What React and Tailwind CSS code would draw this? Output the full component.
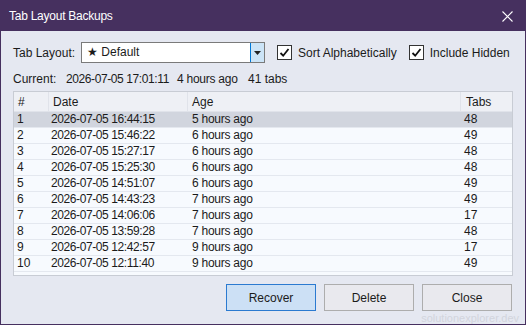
import React from "react";

const rows = [
  ["1", "2026-07-05 16:44:15", "5 hours ago", "48"],
  ["2", "2026-07-05 15:46:22", "6 hours ago", "49"],
  ["3", "2026-07-05 15:27:17", "6 hours ago", "48"],
  ["4", "2026-07-05 15:25:30", "6 hours ago", "48"],
  ["5", "2026-07-05 14:51:07", "6 hours ago", "49"],
  ["6", "2026-07-05 14:43:23", "7 hours ago", "49"],
  ["7", "2026-07-05 14:06:06", "7 hours ago", "17"],
  ["8", "2026-07-05 13:59:28", "7 hours ago", "48"],
  ["9", "2026-07-05 12:42:57", "9 hours ago", "17"],
  ["10", "2026-07-05 12:11:40", "9 hours ago", "49"],
];

function Check({ label }) {
  return (
    <label className="flex items-center gap-[6px]">
      <span className="w-[15px] h-[15px] border border-[#333] bg-white flex items-center justify-center">
        <svg width="11" height="11" viewBox="0 0 11 11">
          <path d="M1.5 6 L4.2 8.7 L9.5 2" fill="none" stroke="#111" strokeWidth="1.8" />
        </svg>
      </span>
      <span>{label}</span>
    </label>
  );
}

export default function App() {
  return (
    <div
      className="w-[526px] h-[325px] flex flex-col bg-[#e5e8f1] border border-[#46305f] text-[12px] text-[#1b1b1b] overflow-hidden"
      style={{ fontFamily: '"Segoe UI", "Liberation Sans", sans-serif' }}
    >
      {/* title bar */}
      <div className="h-[30px] shrink-0 bg-[#46305f] flex items-center justify-between pl-[8px] pr-[12px] text-white">
        <span className="tracking-[-0.25px]">Tab Layout Backups</span>
        <svg width="11" height="11" viewBox="0 0 11 11">
          <path d="M0.5 0.5 L10.5 10.5 M10.5 0.5 L0.5 10.5" stroke="#fff" strokeWidth="1.1" />
        </svg>
      </div>

      <div className="flex-1 flex flex-col pl-[12px] pr-[12px] pt-[11px] relative">
        {/* options row */}
        <div className="flex items-center h-[21px]">
          <span className="w-[68px]">Tab Layout:</span>
          <div className="w-[184px] h-[21px] flex border border-[#7a7a7a] bg-white">
            <span className="flex-1 pl-[5px] leading-[19px]">★ Default</span>
            <span className="w-[14px] h-full bg-[#cce4f7] border-l border-[#0078d7] flex items-center justify-center">
              <svg width="7" height="4" viewBox="0 0 7 4">
                <path d="M0 0 H7 L3.5 4 Z" fill="#222" />
              </svg>
            </span>
          </div>
          <div className="ml-[12px]">
            <Check label="Sort Alphabetically" />
          </div>
          <div className="ml-[12px]">
            <Check label="Include Hidden" />
          </div>
        </div>

        {/* current row */}
        <div className="flex mt-[8px] h-[16px] items-center whitespace-nowrap">
          <span className="w-[53px]">Current:</span>
          <span className="w-[111px] tracking-[-0.4px]">2026-07-05 17:01:11</span>
          <span className="w-[71px] tracking-[-0.25px]">4 hours ago</span>
          <span>41 tabs</span>
        </div>

        {/* list */}
        <div className="mt-[4px] w-[500px] h-[185px] border border-[#c8ccd4] bg-[#f7fafe]">
          <div className="grid grid-cols-[35px_139px_273px_51px] h-[20px] bg-[#eef0f5] border-b border-[#e0e3ea]">
            <span className="pl-[4px] leading-[20px] border-r border-[#e0e3ea]">#</span>
            <span className="pl-[4px] leading-[20px] border-r border-[#e0e3ea]">Date</span>
            <span className="pl-[4px] leading-[20px] border-r border-[#e0e3ea]">Age</span>
            <span className="pl-[5px] leading-[20px]">Tabs</span>
          </div>
          {rows.map((r, i) => (
            <div
              key={r[0]}
              className={`grid grid-cols-[35px_139px_273px_51px] h-[16px] border-b border-[#e4e8ef] whitespace-nowrap ${i === 0 ? "bg-[#d1d5de]" : ""}`}
            >
              <span className="pl-[3px] leading-[15px]">{r[0]}</span>
              <span className="pl-[2px] leading-[15px] tracking-[-0.4px]">{r[1]}</span>
              <span className="pl-[4px] leading-[15px] tracking-[-0.25px]">{r[2]}</span>
              <span className="pl-[3px] leading-[15px]">{r[3]}</span>
            </div>
          ))}
        </div>

        {/* buttons */}
        <div className="flex justify-end gap-[8px] mt-[8px] pr-[1px]">
          <button className="w-[90px] h-[27px] bg-[#cce0f5] border border-[#2b7ad0]">Recover</button>
          <button className="w-[90px] h-[27px] bg-[#e9e9ee] border border-[#adadad]">Delete</button>
          <button className="w-[90px] h-[27px] bg-[#e9e9ee] border border-[#adadad]">Close</button>
        </div>

        <span className="absolute right-[6px] bottom-[-1px] text-[11px] leading-[13px] text-[#d2d5dd]">solutionexplorer.dev</span>
      </div>
    </div>
  );
}
